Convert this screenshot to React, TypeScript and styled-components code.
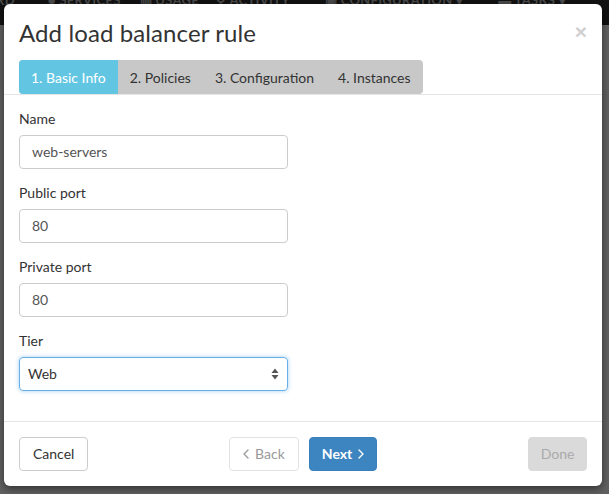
import React from "react";
import styled, { createGlobalStyle } from "styled-components";

const Global = createGlobalStyle`
  html, body { margin: 0; padding: 0; }
  body {
    width: 609px; height: 494px; overflow: hidden;
    background: #606060;
    font-family: Lato, "Open Sans", "Liberation Sans", sans-serif;
  }
  * { box-sizing: border-box; }
`;

const Page = styled.div`
  position: relative;
  width: 609px;
  height: 494px;
  background: #616161;
  overflow: hidden;
`;

const NavBar = styled.div`
  height: 25px;
  background: #121212;
  overflow: hidden;
`;

const NavRow = styled.div`
  display: flex;
  align-items: center;
  margin-top: -8px;
  margin-left: -4px;
  height: 16px;
  color: #4a4a4a;
  font-size: 13px;
  font-weight: 700;
  letter-spacing: 0.3px;
  white-space: nowrap;
`;

const NavItem = styled.span<{ $ml: number }>`
  margin-left: ${(p) => p.$ml}px;
`;

const Overlay = styled.div`
  position: absolute;
  inset: 0;
  padding: 4px 6px 0 4px;
`;

const Modal = styled.div`
  width: 598px;
  height: 482px;
  background: #fff;
  border-radius: 6px;
  box-shadow: 0 3px 9px rgba(0, 0, 0, 0.5);
  display: flex;
  flex-direction: column;
`;

const Header = styled.div`
  position: relative;
  padding: 16px 15px 0 15px;
  border-bottom: 1px solid #e5e5e5;
`;

const Title = styled.h4`
  margin: 0 0 14px 0;
  font-size: 24px;
  font-weight: 400;
  line-height: 26px;
  color: #333;
  letter-spacing: 0.1px;
`;

const Close = styled.span`
  position: absolute;
  right: 15px;
  top: 17px;
  font-size: 21px;
  font-weight: 700;
  color: #d0d0d0;
  line-height: 1;
  font-family: "Liberation Sans", sans-serif;
`;

const Tabs = styled.div`
  display: inline-flex;
  background: #c8c8c8;
  border-radius: 4px;
  overflow: hidden;
`;

const Tab = styled.div<{ $active?: boolean }>`
  height: 34px;
  padding: 0 12px;
  display: flex;
  align-items: center;
  font-size: 14px;
  color: ${(p) => (p.$active ? "#fff" : "#333")};
  background: ${(p) => (p.$active ? "#62c6e3" : "transparent")};
`;

const Body = styled.div`
  flex: 1;
  padding: 14px 15px 0 15px;
  border-bottom: 1px solid #e5e5e5;
`;

const Group = styled.div`
  margin-bottom: 14px;
`;

const Label = styled.label`
  display: block;
  font-size: 14px;
  line-height: 20px;
  color: #333;
  margin-bottom: 6px;
`;

const Input = styled.div`
  width: 269px;
  height: 34px;
  border: 1px solid #ccc;
  border-radius: 4px;
  padding: 0 12px 1px 12px;
  display: flex;
  align-items: center;
  font-size: 14px;
  color: #555;
`;

const Select = styled.div`
  width: 269px;
  height: 34px;
  border: 1px solid #66afe9;
  border-radius: 4px;
  box-shadow: 0 0 4px rgba(102, 175, 233, 0.6);
  padding: 0 8px 1px 8px;
  display: flex;
  align-items: center;
  justify-content: space-between;
  font-size: 14px;
  color: #333;
`;

const Footer = styled.div`
  padding: 15px;
  display: flex;
  align-items: center;
`;

const Center = styled.div`
  flex: 1;
  display: flex;
  justify-content: center;
  gap: 10px;
  padding-right: 10px;
`;

type Variant = "default" | "disabled" | "primary" | "done";

const Button = styled.div<{ $v: Variant }>`
  height: 34px;
  padding: 0 ${(p) => (p.$v === "primary" ? 12 : 13)}px 1px;
  justify-content: center;
  border-radius: 4px;
  display: flex;
  align-items: center;
  gap: 6px;
  font-size: 14px;
  border: 1px solid
    ${(p) =>
      p.$v === "default" ? "#ccc" : p.$v === "disabled" ? "#e2e2e2" : p.$v === "primary" ? "#3a80bb" : "#dadada"};
  background: ${(p) => (p.$v === "primary" ? "#3d85c1" : p.$v === "done" ? "#dadada" : "#fff")};
  color: ${(p) =>
    p.$v === "default" ? "#333" : p.$v === "disabled" ? "#999" : p.$v === "primary" ? "#fff" : "#aaa"};
  font-weight: ${(p) => (p.$v === "primary" ? 700 : 400)};
`;

const DoneButton = styled(Button)`
  padding: 0 0 1px;
  width: 59px;
`;

const Chevron = ({ dir }: { dir: "left" | "right" }) => (
  <svg width="6" height="10" viewBox="0 0 6 10" fill="none">
    <path
      d={dir === "left" ? "M5 1L1 5l4 4" : "M1 1l4 4-4 4"}
      stroke="currentColor"
      strokeWidth="1.3"
      strokeLinecap="round"
      strokeLinejoin="round"
    />
  </svg>
);

const Arrows = () => (
  <svg width="8" height="12" viewBox="0 0 8 12">
    <path d="M4 0.5L7.5 5H0.5z" fill="#555" />
    <path d="M4 11.5L0.5 7h7z" fill="#555" />
  </svg>
);

export default function App() {
  return (
    <>
      <Global />
      <Page>
        <NavBar>
          <NavRow>
            <NavItem $ml={0}>RD</NavItem>
            <NavItem $ml={33}>● SERVICES</NavItem>
            <NavItem $ml={19}>▥ USAGE</NavItem>
            <NavItem $ml={17}>⚲ ACTIVITY</NavItem>
            <NavItem $ml={35}>▣ CONFIGURATION ▾</NavItem>
            <NavItem $ml={35}>▬ TASKS ▾</NavItem>
          </NavRow>
        </NavBar>
        <Overlay>
          <Modal>
            <Header>
              <Title>Add load balancer rule</Title>
              <Close>×</Close>
              <Tabs>
                <Tab $active>1. Basic Info</Tab>
                <Tab>2. Policies</Tab>
                <Tab>3. Configuration</Tab>
                <Tab>4. Instances</Tab>
              </Tabs>
            </Header>
            <Body>
              <Group>
                <Label>Name</Label>
                <Input>web-servers</Input>
              </Group>
              <Group>
                <Label>Public port</Label>
                <Input>80</Input>
              </Group>
              <Group>
                <Label>Private port</Label>
                <Input>80</Input>
              </Group>
              <Group>
                <Label>Tier</Label>
                <Select>
                  <span>Web</span>
                  <Arrows />
                </Select>
              </Group>
            </Body>
            <Footer>
              <Button $v="default">Cancel</Button>
              <Center>
                <Button $v="disabled">
                  <Chevron dir="left" /> Back
                </Button>
                <Button $v="primary">
                  Next <Chevron dir="right" />
                </Button>
              </Center>
              <DoneButton $v="done">Done</DoneButton>
            </Footer>
          </Modal>
        </Overlay>
      </Page>
    </>
  );
}
